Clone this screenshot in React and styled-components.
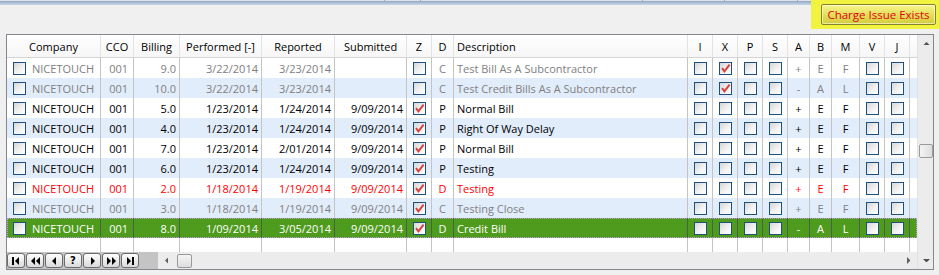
import React from 'react';
import styled, { createGlobalStyle, css } from 'styled-components';

const GlobalStyle = createGlobalStyle`
  html, body {
    margin: 0;
    padding: 0;
    background: #f0f0f0;
  }
  body {
    font-family: 'Open Sans', 'Liberation Sans', sans-serif;
    font-size: 11px;
    color: #000;
  }
`;

const COLS = '94px 33px 46px 82px 73px 72px 25px 22px 234px 25px 25px 25px 25px 22px 22px 28px 25px 25px 7px';

const TONES = {
  gray: '#808080',
  normal: '#000000',
  red: '#ff0000',
  selected: '#ffffff',
};

const Page = styled.div`
  width: 939px;
  height: 275px;
  display: flex;
  flex-direction: column;
`;

const Toolbar = styled.div`
  display: flex;
  height: 29px;
`;

const StripArea = styled.div`
  flex: 1;
  display: flex;
  flex-direction: column;
`;

const TabEdges = styled.div`
  display: flex;
  height: 1px;
  background: #dde3ea;
`;

const TabEdge = styled.div`
  width: ${(p) => p.$w}px;
  border-right: 1px solid #a4acb6;
  box-sizing: border-box;
`;

const BlueBar = styled.div`
  height: 4px;
  background: linear-gradient(#93a8c1, #c8d8eb);
`;

const AlertBox = styled.div`
  width: 128px;
  box-sizing: border-box;
  padding: 4px 0 0 10px;
  background: #f2f240;
`;

const AlertButton = styled.button`
  width: 115px;
  height: 21px;
  padding: 0;
  border: 1px solid #85832a;
  border-radius: 2px;
  background: linear-gradient(#f8f58f, #e3dd55 55%, #d4cd3e);
  color: #e0001a;
  font-family: 'Open Sans', 'Liberation Sans', sans-serif;
  font-size: 11.5px;
  box-shadow: inset 0 0 0 1px rgba(255, 255, 240, 0.6);
`;

const Grid = styled.div`
  margin: 5px 0 0 6px;
  width: 928px;
  height: 236px;
  box-sizing: border-box;
  border: 1px solid #828790;
  display: flex;
  background: #ffffff;
`;

const Main = styled.div`
  width: 910px;
  display: flex;
  flex-direction: column;
`;

const HeaderRow = styled.div`
  display: grid;
  grid-template-columns: ${COLS};
  height: 23px;
  box-sizing: border-box;
  border-bottom: 1px solid #d5d5d5;
  background: linear-gradient(#ffffff, #f6f6f6);
`;

const HeadCell = styled.div`
  display: flex;
  align-items: center;
  justify-content: ${(p) => (p.$left ? 'flex-start' : 'center')};
  padding: 0 3px;
  border-right: ${(p) => (p.$last ? 'none' : '1px solid #e3e3e3')};
  white-space: nowrap;
`;

const Cell = styled.div`
  display: flex;
  align-items: center;
  justify-content: ${(p) => p.$align || 'flex-start'};
  gap: 6px;
  padding: ${(p) => (p.$pad ? p.$pad : '0 3px')};
  border-right: ${(p) => (p.$last ? 'none' : '1px solid #c4c4c4')};
  white-space: nowrap;
  overflow: hidden;
`;

const Row = styled.div`
  display: grid;
  grid-template-columns: ${COLS};
  height: ${(p) => p.$h || 20}px;
  background: ${(p) => (p.$selected ? '#4e9b1d' : p.$alt ? '#e2edfb' : '#ffffff')};
  color: ${(p) => TONES[p.$tone] || '#000'};
  ${(p) =>
    p.$selected &&
    css`
      outline: 1px dotted #c59be6;
      outline-offset: -1px;
      ${Cell} {
        border-right-color: #47614a;
      }
    `}
`;

const Spacer = styled.div`
  flex: 1;
`;

const Box = styled.span`
  width: 13px;
  height: 13px;
  flex: none;
  box-sizing: border-box;
  border: 1px solid #1f4f7d;
  background: linear-gradient(135deg, #d6d6d6 0%, #f2f2f2 55%, #ffffff 100%);
  display: flex;
  align-items: center;
  justify-content: center;
`;

const BottomBar = styled.div`
  height: 17px;
  display: flex;
  background: #ececec;
`;

const NavStrip = styled.div`
  width: 151px;
  display: flex;
  gap: 1px;
  padding-top: 1px;
  box-sizing: border-box;
  background: #c4c4c4;
`;

const NavButton = styled.div`
  width: 18px;
  height: 15px;
  box-sizing: border-box;
  border: 1px solid #6b6b6b;
  border-radius: 3px;
  background: linear-gradient(#fefefe, #dadada);
  display: flex;
  align-items: center;
  justify-content: center;
  font-weight: bold;
  font-size: 10px;
  font-family: 'DejaVu Sans', sans-serif;
`;

const HScroll = styled.div`
  flex: 1;
  display: flex;
  align-items: center;
`;

const ArrowBtn = styled.div`
  width: ${(p) => (p.$vertical ? '16px' : '17px')};
  height: ${(p) => (p.$vertical ? '17px' : '16px')};
  display: flex;
  align-items: center;
  justify-content: center;
  flex: none;
`;

const Thumb = styled.div`
  width: ${(p) => (p.$vertical ? '14px' : '15px')};
  height: 14px;
  box-sizing: border-box;
  border: 1px solid #9a9a9a;
  border-radius: 2px;
  background: ${(p) =>
    p.$vertical
      ? 'linear-gradient(90deg, #f4f4f4, #dedede)'
      : 'linear-gradient(#f4f4f4, #dedede)'};
  margin: ${(p) => (p.$vertical ? '92px 0 0 1px' : '0 0 0 2px')};
  flex: none;
`;

const VScroll = styled.div`
  width: 16px;
  display: flex;
  flex-direction: column;
  background: #ececec;
  border-left: 1px solid #e2e2e2;
  box-sizing: border-box;
`;

const Check = ({ on }) => (
  <Box>
    {on && (
      <svg width="11" height="11" viewBox="0 0 11 11">
        <path d="M2 5.2 L4.4 8.3 L9.6 1.6" stroke="#d8413e" strokeWidth="2" fill="none" />
      </svg>
    )}
  </Box>
);

const Tri = ({ dir, size = 4, color = '#000' }) => {
  const s = size;
  const pts = {
    left: `${s},0 ${s},${s * 2} 0,${s}`,
    right: `0,0 0,${s * 2} ${s},${s}`,
    up: `0,${s} ${s * 2},${s} ${s},0`,
    down: `0,0 ${s * 2},0 ${s},${s}`,
  }[dir];
  const w = dir === 'left' || dir === 'right' ? s : s * 2;
  const h = dir === 'left' || dir === 'right' ? s * 2 : s;
  return (
    <svg width={w} height={h} viewBox={`0 0 ${w} ${h}`}>
      <polygon points={pts} fill={color} />
    </svg>
  );
};

const NavIcon = ({ kind }) => {
  const shapes = {
    first: (
      <>
        <rect x="1" y="1" width="2" height="8" />
        <polygon points="8,1 8,9 4,5" />
      </>
    ),
    prevPage: (
      <>
        <polygon points="5,1 5,9 1,5" />
        <polygon points="10,1 10,9 6,5" />
      </>
    ),
    prev: <polygon points="7,1 7,9 3,5" />,
    next: <polygon points="4,1 4,9 8,5" />,
    nextPage: (
      <>
        <polygon points="1,1 1,9 5,5" />
        <polygon points="6,1 6,9 10,5" />
      </>
    ),
    last: (
      <>
        <polygon points="2,1 2,9 6,5" />
        <rect x="7" y="1" width="2" height="8" />
      </>
    ),
  };
  return (
    <svg width="11" height="10" viewBox="0 0 11 10" fill="#000">
      {shapes[kind]}
    </svg>
  );
};

const headers = [
  'Company', 'CCO', 'Billing', 'Performed [-]', 'Reported', 'Submitted', 'Z', 'D',
  'Description', 'I', 'X', 'P', 'S', 'A', 'B', 'M', 'V', 'J', '',
];

const rows = [
  { tone: 'gray', billing: '9.0', performed: '3/22/2014', reported: '3/23/2014', submitted: '', z: false, d: 'C', desc: 'Test Bill As A Subcontractor', x: true, a: '+', b: 'E', m: 'F' },
  { tone: 'gray', billing: '10.0', performed: '3/22/2014', reported: '3/23/2014', submitted: '', z: false, d: 'C', desc: 'Test Credit Bills As A Subcontractor', x: true, a: '-', b: 'A', m: 'L' },
  { tone: 'normal', billing: '5.0', performed: '1/23/2014', reported: '1/24/2014', submitted: '9/09/2014', z: true, d: 'P', desc: 'Normal Bill', x: false, a: '+', b: 'E', m: 'F' },
  { tone: 'normal', billing: '4.0', performed: '1/23/2014', reported: '1/24/2014', submitted: '9/09/2014', z: true, d: 'P', desc: 'Right Of Way Delay', x: false, a: '+', b: 'E', m: 'F' },
  { tone: 'normal', billing: '7.0', performed: '1/23/2014', reported: '2/01/2014', submitted: '9/09/2014', z: true, d: 'P', desc: 'Normal Bill', x: false, a: '+', b: 'E', m: 'F' },
  { tone: 'normal', billing: '6.0', performed: '1/23/2014', reported: '1/24/2014', submitted: '9/09/2014', z: true, d: 'P', desc: 'Testing', x: false, a: '+', b: 'E', m: 'F' },
  { tone: 'red', billing: '2.0', performed: '1/18/2014', reported: '1/19/2014', submitted: '9/09/2014', z: true, d: 'D', desc: 'Testing', x: false, a: '+', b: 'E', m: 'F' },
  { tone: 'gray', billing: '3.0', performed: '1/18/2014', reported: '1/19/2014', submitted: '9/09/2014', z: true, d: 'C', desc: 'Testing Close', x: false, a: '+', b: 'E', m: 'F' },
  { tone: 'selected', billing: '8.0', performed: '1/09/2014', reported: '3/05/2014', submitted: '9/09/2014', z: true, d: 'D', desc: 'Credit Bill', x: false, a: '-', b: 'A', m: 'L' },
];

function App() {
  return (
    <Page>
      <GlobalStyle />
      <Toolbar>
        <StripArea>
          <TabEdges>
            {[385, 36, 222, 82, 73].map((w, i) => (
              <TabEdge key={i} $w={w} />
            ))}
          </TabEdges>
          <BlueBar />
        </StripArea>
        <AlertBox>
          <AlertButton>Charge Issue Exists</AlertButton>
        </AlertBox>
      </Toolbar>

      <Grid>
        <Main>
          <HeaderRow>
            {headers.map((h, i) => (
              <HeadCell key={i} $left={h === 'Description'} $last={i === headers.length - 1}>
                {h}
              </HeadCell>
            ))}
          </HeaderRow>

          {rows.map((r, i) => (
            <Row key={i} $tone={r.tone} $alt={i % 2 === 1} $selected={r.tone === 'selected'}>
              <Cell $pad="0 0 0 6px">
                <Check />
                NICETOUCH
              </Cell>
              <Cell $align="flex-end" $pad="0 5px 0 0">001</Cell>
              <Cell $align="flex-end">{r.billing}</Cell>
              <Cell $align="flex-end">{r.performed}</Cell>
              <Cell $align="flex-end">{r.reported}</Cell>
              <Cell $align="flex-end">{r.submitted}</Cell>
              <Cell $align="center" $pad="0">
                <Check on={r.z} />
              </Cell>
              <Cell $align="center" $pad="0">{r.d}</Cell>
              <Cell>{r.desc}</Cell>
              <Cell $align="center" $pad="0"><Check /></Cell>
              <Cell $align="center" $pad="0"><Check on={r.x} /></Cell>
              <Cell $align="center" $pad="0"><Check /></Cell>
              <Cell $align="center" $pad="0"><Check /></Cell>
              <Cell $align="center" $pad="0">{r.a}</Cell>
              <Cell $align="center" $pad="0">{r.b}</Cell>
              <Cell $align="center" $pad="0">{r.m}</Cell>
              <Cell $align="center" $pad="0"><Check /></Cell>
              <Cell $align="center" $pad="0"><Check /></Cell>
              <Cell $last />
            </Row>
          ))}

          <Row $h={14}>
            {headers.map((_, i) => (
              <Cell key={i} $last={i === headers.length - 1} />
            ))}
          </Row>

          <BottomBar>
            <NavStrip>
              <NavButton><NavIcon kind="first" /></NavButton>
              <NavButton><NavIcon kind="prevPage" /></NavButton>
              <NavButton><NavIcon kind="prev" /></NavButton>
              <NavButton>?</NavButton>
              <NavButton><NavIcon kind="next" /></NavButton>
              <NavButton><NavIcon kind="nextPage" /></NavButton>
              <NavButton><NavIcon kind="last" /></NavButton>
            </NavStrip>
            <HScroll>
              <ArrowBtn><Tri dir="left" size={3.5} color="#606060" /></ArrowBtn>
              <Thumb />
              <Spacer />
              <ArrowBtn><Tri dir="right" size={3.5} color="#606060" /></ArrowBtn>
            </HScroll>
          </BottomBar>
        </Main>

        <VScroll>
          <ArrowBtn $vertical><Tri dir="up" size={3.5} color="#505050" /></ArrowBtn>
          <Thumb $vertical />
          <Spacer />
          <ArrowBtn $vertical><Tri dir="down" size={3.5} color="#505050" /></ArrowBtn>
        </VScroll>
      </Grid>
    </Page>
  );
}

export default App;
